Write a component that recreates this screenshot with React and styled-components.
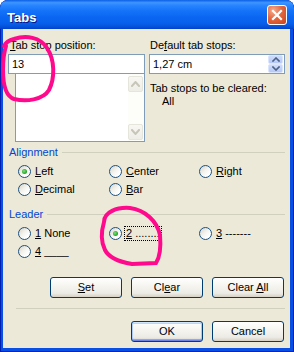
import React from "react";
import styled, { createGlobalStyle, css } from "styled-components";

const Global = createGlobalStyle`
  html, body { margin: 0; padding: 0; background: #ffffff; }
  body { font-family: "Liberation Sans", Arial, sans-serif; font-size: 11px; color: #000; }
  #root { width: 294px; height: 352px; }
`;

const Window = styled.div`
  position: relative;
  width: 294px;
  height: 352px;
  box-sizing: border-box;
  display: flex;
  flex-direction: column;
  background: #0a4fe4;
  border-radius: 8px 8px 0 0;
  box-shadow: inset 1px 0 #0020b0, inset -1px 0 #0020b0, inset 0 -1px #0020b0;
  overflow: hidden;
`;

const TitleBar = styled.div`
  height: 29px;
  flex: none;
  box-sizing: border-box;
  display: flex;
  align-items: center;
  justify-content: space-between;
  padding: 0 7px 0 7px;
  background: linear-gradient(
    180deg,
    #0a5fe6 0%,
    #3d95ff 9%,
    #2a86ff 18%,
    #1272f8 38%,
    #0a66f2 60%,
    #0760ea 80%,
    #0550d8 93%,
    #0340c8 100%
  );
  border-radius: 8px 8px 0 0;
`;

const TitleText = styled.div`
  padding-top: 6px;
  font-family: "Liberation Sans", Arial, sans-serif;
  font-weight: bold;
  font-size: 13px;
  line-height: 15px;
  color: #ffffff;
  text-shadow: 1px 1px #0a1883;
`;

const CloseBtn = styled.div`
  width: 20px;
  height: 20px;
  box-sizing: border-box;
  border: 1px solid #ffffff;
  border-radius: 3px;
  background: radial-gradient(circle at 30% 25%, #f4ad8f 0%, #e3683f 45%, #c9421b 100%);
  display: flex;
  align-items: center;
  justify-content: center;
`;

const Client = styled.div`
  flex: 1;
  margin: 0 4px 4px 3px;
  background: #ece9d8;
  padding: 10px 5px 0 5px;
  display: flex;
  flex-direction: column;
`;

const TopSection = styled.div`
  display: grid;
  grid-template-columns: 137px 136px;
  column-gap: 4px;
`;

const Column = styled.div`
  display: flex;
  flex-direction: column;
`;

const Label = styled.div`
  height: 13px;
  line-height: 13px;
  margin-bottom: 2px;
  padding-left: ${(p) => p.$indent ?? 2}px;
  white-space: nowrap;
`;

const Note = styled.div`
  height: 13px;
  line-height: 13px;
  margin-top: ${(p) => p.$mt ?? 0}px;
  padding-left: ${(p) => p.$indent ?? 1}px;
  white-space: nowrap;
`;

const TextBox = styled.div`
  height: 20px;
  box-sizing: border-box;
  border: 1px solid #7f9db9;
  background: #ffffff;
  display: flex;
  align-items: center;
  justify-content: space-between;
  padding: 0 1px 0 3px;
`;

const ListBox = styled.div`
  margin-left: 7px;
  height: 68px;
  box-sizing: border-box;
  border: 1px solid #7f9db9;
  border-top: none;
  background: #ffffff;
  display: flex;
  justify-content: flex-end;
`;

const ScrollBar = styled.div`
  width: 15px;
  display: flex;
  flex-direction: column;
  justify-content: space-between;
  padding: 2px 1px 1px 0;
  background: #fdfdfa;
`;

const ScrollBtn = styled.div`
  height: 16px;
  box-sizing: border-box;
  border: 1px solid #e6e5dc;
  border-radius: 2px;
  background: linear-gradient(180deg, #f8f7f3, #eeede6);
  display: flex;
  align-items: center;
  justify-content: center;
`;

const Spin = styled.div`
  width: 15px;
  height: 18px;
  display: flex;
  flex-direction: column;
`;

const SpinHalf = styled.div`
  flex: 1;
  box-sizing: border-box;
  border: 1px solid #dbe5fd;
  border-radius: 2px;
  background: linear-gradient(180deg, #cddbfc, #b6c9f7);
  display: flex;
  align-items: center;
  justify-content: center;
`;

const GroupHeader = styled.div`
  display: flex;
  align-items: center;
  margin-top: ${(p) => p.$mt}px;
  height: 13px;
  line-height: 13px;
  color: #0046d5;
  padding-left: 1px;
  &::after {
    content: "";
    flex: 1;
    height: 1px;
    background: #d0d0bf;
    margin-left: 4px;
  }
`;

const RadioGrid = styled.div`
  display: grid;
  grid-template-columns: 91px 90px auto;
  grid-auto-rows: 18px;
  padding-left: 10px;
  margin-top: 3px;
`;

const RadioItem = styled.div`
  display: flex;
  align-items: center;
  gap: 4px;
  white-space: nowrap;
`;

const RadioCircle = styled.span`
  position: relative;
  width: 13px;
  height: 13px;
  flex: none;
  box-sizing: border-box;
  border-radius: 50%;
  border: 1px solid #1c5180;
  background: linear-gradient(135deg, #d6d4c8 0%, #f4f3ee 45%, #ffffff 75%);
  ${(p) =>
    p.$checked &&
    css`
      &::after {
        content: "";
        position: absolute;
        left: 3px;
        top: 3px;
        width: 5px;
        height: 5px;
        border-radius: 50%;
        background: radial-gradient(circle at 40% 40%, #7fe07f 0%, #2aab2a 60%, #1a8f1a 100%);
      }
    `}
`;

const RadioLabel = styled.span`
  line-height: 13px;
  ${(p) =>
    p.$focus &&
    css`
      margin-left: -2px;
      padding: 0 1px;
      border: 1px dotted #000;
    `}
`;

const Acc = styled.u`
  text-decoration: underline;
  text-underline-offset: 1px;
`;

const ButtonRow = styled.div`
  display: flex;
  justify-content: flex-end;
  gap: 9px;
  margin-top: ${(p) => p.$mt}px;
  padding-right: 1px;
`;

const Button = styled.div`
  width: 72px;
  height: 21px;
  box-sizing: border-box;
  border: 1px solid #003c74;
  border-radius: 3px;
  background: linear-gradient(180deg, #ffffff 0%, #f6f5f0 40%, #ecebe5 80%, #d6d0c4 100%);
  display: flex;
  align-items: center;
  justify-content: center;
  line-height: 13px;
  white-space: pre;
  ${(p) =>
    p.$default &&
    css`
      box-shadow: inset 0 1px #cee7ff, inset 0 -1px #6982ee, inset 1px 0 #aecaf6,
        inset -1px 0 #aecaf6, inset 0 2px #bcd4f6, inset 0 -2px #89ade4;
    `}
`;

const ButtonText = styled.span`
  white-space: pre;
`;

const Separator = styled.div`
  height: 1px;
  margin: 10px 0 0 8px;
  background: #d0d0bf;
`;

const Overlay = styled.svg`
  position: absolute;
  left: 0;
  top: 0;
  width: 294px;
  height: 352px;
  pointer-events: none;
`;

const Chevron = ({ up, color, w = 7, h = 4, sw = 2 }) => (
  <svg width={w + 2} height={h + 2} viewBox={`0 0 ${w + 2} ${h + 2}`}>
    <path
      d={up ? `M1 ${h + 1} L${(w + 2) / 2} 1 L${w + 1} ${h + 1}` : `M1 1 L${(w + 2) / 2} ${h + 1} L${w + 1} 1`}
      fill="none"
      stroke={color}
      strokeWidth={sw}
      strokeLinecap="square"
    />
  </svg>
);

const Radio = ({ checked, focus, children }) => (
  <RadioItem>
    <RadioCircle $checked={checked} />
    <RadioLabel $focus={focus}>{children}</RadioLabel>
  </RadioItem>
);

export default function App() {
  return (
    <>
      <Global />
      <Window>
        <TitleBar>
          <TitleText>Tabs</TitleText>
          <CloseBtn>
            <svg width="12" height="12" viewBox="0 0 12 12">
              <path d="M2 2 L10 10 M10 2 L2 10" stroke="#ffffff" strokeWidth="2.2" strokeLinecap="square" />
            </svg>
          </CloseBtn>
        </TitleBar>
        <Client>
          <TopSection>
            <Column>
              <Label>
                <Acc>T</Acc>ab stop position:
              </Label>
              <TextBox>13</TextBox>
              <ListBox>
                <ScrollBar>
                  <ScrollBtn>
                    <Chevron up color="#c8c6b8" />
                  </ScrollBtn>
                  <ScrollBtn>
                    <Chevron color="#c8c6b8" />
                  </ScrollBtn>
                </ScrollBar>
              </ListBox>
            </Column>
            <Column>
              <Label $indent={1}>
                De<Acc>f</Acc>ault tab stops:
              </Label>
              <TextBox>
                <span>1,27 cm</span>
                <Spin>
                  <SpinHalf>
                    <Chevron up color="#4d6185" w={6} h={3} sw={1.6} />
                  </SpinHalf>
                  <SpinHalf>
                    <Chevron color="#4d6185" w={6} h={3} sw={1.6} />
                  </SpinHalf>
                </Spin>
              </TextBox>
              <Note $mt={8}>Tab stops to be cleared:</Note>
              <Note $indent={13}>All</Note>
            </Column>
          </TopSection>

          <GroupHeader $mt={4}>Alignment</GroupHeader>
          <RadioGrid>
            <Radio checked>
              <Acc>L</Acc>eft
            </Radio>
            <Radio>
              <Acc>C</Acc>enter
            </Radio>
            <Radio>
              <Acc>R</Acc>ight
            </Radio>
            <Radio>
              <Acc>D</Acc>ecimal
            </Radio>
            <Radio>
              <Acc>B</Acc>ar
            </Radio>
          </RadioGrid>

          <GroupHeader $mt={10}>Leader</GroupHeader>
          <RadioGrid>
            <Radio>
              <Acc>1</Acc> None
            </Radio>
            <Radio checked focus>
              <Acc>2</Acc> ........
            </Radio>
            <Radio>
              <Acc>3</Acc> -------
            </Radio>
            <Radio>
              <Acc>4</Acc> ____
            </Radio>
          </RadioGrid>

          <ButtonRow $mt={17}>
            <Button>
              <ButtonText>
                <Acc>S</Acc>et
              </ButtonText>
            </Button>
            <Button>
              <ButtonText>
                Cl<Acc>e</Acc>ar
              </ButtonText>
            </Button>
            <Button>
              <ButtonText>
                {"Clear "}
                <Acc>A</Acc>ll
              </ButtonText>
            </Button>
          </ButtonRow>

          <Separator />

          <ButtonRow $mt={12}>
            <Button $default>
              <ButtonText>OK</ButtonText>
            </Button>
            <Button>
              <ButtonText>Cancel</ButtonText>
            </Button>
          </ButtonRow>
        </Client>

        <Overlay viewBox="0 0 294 352">
          <path
            d="M4 46 C6 42 10 40 14 39 C26 35 40 37 47 48 C55 60 55 78 49 90 C43 100 26 102 14 99 C5 96 3 84 3 70 C3 60 4 52 6 46"
            fill="none"
            stroke="#ff0a8c"
            strokeWidth="4"
            strokeLinecap="round"
          />
          <path
            d="M104 222 C104 212 117 207 130 208 C145 210 157 221 160 235 C161 247 160 257 156 263 L132 264 C120 262 109 258 105 250 C101 242 101 232 104 222"
            fill="none"
            stroke="#ff0a8c"
            strokeWidth="4"
            strokeLinecap="round"
          />
        </Overlay>
      </Window>
    </>
  );
}
